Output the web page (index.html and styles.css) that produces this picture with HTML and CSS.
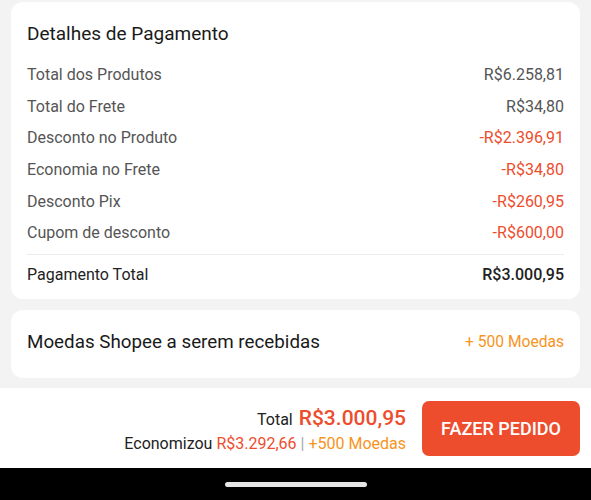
FILE: index.html
```html
<!DOCTYPE html>
<html lang="pt-BR">
<head>
  <meta charset="UTF-8">
  <title>Detalhes de Pagamento</title>
  <link rel="stylesheet" href="styles.css">
</head>
<body>
<div class="page">
  <div class="card details">
    <h2 class="card-title">Detalhes de Pagamento</h2>
    <div class="row"><span>Total dos Produtos</span><span>R$6.258,81</span></div>
    <div class="row"><span>Total do Frete</span><span>R$34,80</span></div>
    <div class="row discount"><span>Desconto no Produto</span><span>-R$2.396,91</span></div>
    <div class="row discount"><span>Economia no Frete</span><span>-R$34,80</span></div>
    <div class="row discount"><span>Desconto Pix</span><span>-R$260,95</span></div>
    <div class="row discount"><span>Cupom de desconto</span><span>-R$600,00</span></div>
    <div class="row total"><span>Pagamento Total</span><span class="total-value">R$3.000,95</span></div>
  </div>

  <div class="card coins">
    <span class="coins-label">Moedas Shopee a serem recebidas</span>
    <span class="coins-value">+ 500 Moedas</span>
  </div>
</div>

<div class="checkout">
  <div class="summary">
    <div class="summary-total">Total <span class="big-price">R$3.000,95</span></div>
    <div class="summary-saved">Economizou <span class="red">R$3.292,66</span> <span class="sep">|</span> <span class="orange">+500 Moedas</span></div>
  </div>
  <button class="order-btn">FAZER PEDIDO</button>
</div>

<div class="navbar">
  <div class="home-indicator"></div>
</div>
</body>
</html>
```

FILE: styles.css
```css
body {
  margin: 0;
  font-family: Roboto, "Liberation Sans", Arial, sans-serif;
  background-color: #f3f3f3;
  color: #222;
}

.page {
  padding: 2px 11px 0 11px;
  height: 386px;
  display: flex;
  flex-direction: column;
  gap: 11px;
}

.card {
  background-color: #fff;
  border-radius: 12px;
  padding: 0 16px;
}

.details {
  padding-top: 20px;
  padding-bottom: 5px;
}

.card-title {
  margin: 0 0 13px 0;
  font-size: 19px;
  font-weight: 400;
  line-height: 24px;
  color: #1a1a1a;
}

.row {
  display: flex;
  justify-content: space-between;
  align-items: center;
  height: 31.6px;
  font-size: 16px;
  color: #555;
}

.row.discount span:last-child {
  color: #ee4d2d;
}

.row.total {
  margin-top: 5px;
  border-top: 1px solid #ececec;
  height: 39px;
  color: #222;
}

.total-value {
  font-weight: 500;
}

.coins {
  height: 64px;
  padding-bottom: 4px;
  display: flex;
  justify-content: space-between;
  align-items: center;
}

.coins-label {
  font-size: 18.8px;
  color: #1a1a1a;
}

.coins-value {
  font-size: 15.6px;
  color: #f7941d;
}

.checkout {
  height: 80px;
  background-color: #fff;
  display: flex;
  justify-content: flex-end;
  align-items: center;
  padding: 0 11px;
  gap: 16px;
}

.summary {
  text-align: right;
  padding-top: 2px;
}

.summary-total {
  font-size: 16px;
  color: #222;
}

.big-price {
  font-size: 21px;
  font-weight: 500;
  color: #ee4d2d;
  margin-left: 2px;
}

.summary-saved {
  font-size: 16px;
  color: #222;
  margin-top: 4px;
}

.red {
  color: #ee4d2d;
}

.orange {
  color: #f7941d;
}

.sep {
  color: #aaa;
}

.order-btn {
  width: 158px;
  height: 55px;
  background-color: #ee4d2d;
  color: #fff;
  border: none;
  border-radius: 7px;
  font-family: Roboto, "Liberation Sans", Arial, sans-serif;
  font-size: 18px;
  font-weight: 500;
}

.navbar {
  height: 32px;
  background-color: #000;
  display: flex;
  justify-content: center;
  padding-top: 14px;
  box-sizing: border-box;
}

.home-indicator {
  width: 142px;
  height: 5px;
  border-radius: 3px;
  background-color: #e6e6e6;
}
```
